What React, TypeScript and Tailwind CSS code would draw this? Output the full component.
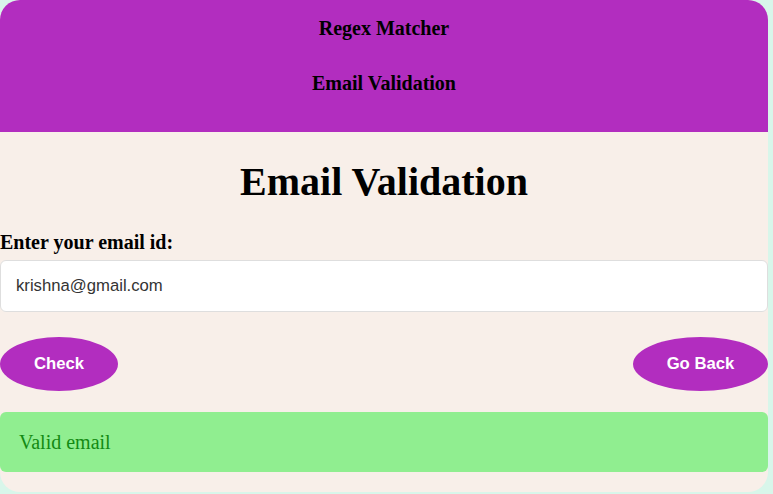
export default function App() {
  return (
    <div className="min-h-screen w-full bg-[#d8f6ea] pr-[5px] pb-[3px]">
      <div className="overflow-hidden rounded-[20px] bg-[#f8efe9] pb-[20px]">
        <header className="flex h-[132px] flex-col items-center bg-[#b22dbf] pt-[16px] font-['Liberation_Serif',serif] text-[20px] font-bold text-black">
          <h3 className="leading-[24px]">Regex Matcher</h3>
          <h3 className="mt-[31px] leading-[24px]">Email Validation</h3>
        </header>

        <main className="font-['Liberation_Serif',serif]">
          <h1 className="mt-[27px] text-center text-[40px] font-bold leading-[46px] text-black">
            Email Validation
          </h1>

          <label className="mt-[25px] block text-[20px] font-bold leading-[24px] text-black">
            Enter your email id:
          </label>
          <div className="mt-[6px] flex h-[52px] items-center rounded-[6px] border border-[#dedede] bg-white px-[15px] font-['Liberation_Sans',sans-serif] text-[16.7px] text-[#333]">
            krishna@gmail.com
          </div>

          <div className="mt-[25px] flex items-center justify-between">
            <button className="h-[54px] w-[118px] rounded-[50%] bg-[#b22dbf] font-['Liberation_Sans',sans-serif] text-[16.7px] font-bold text-white">
              Check
            </button>
            <button className="h-[54px] w-[135px] rounded-[50%] bg-[#b22dbf] font-['Liberation_Sans',sans-serif] text-[16.7px] font-bold text-white">
              Go Back
            </button>
          </div>

          <div className="mt-[21px] flex h-[60px] items-center rounded-[6px] bg-[#90ee90] px-[19px] text-[20px] text-[#138a13]">
            Valid email
          </div>
        </main>
      </div>
    </div>
  );
}
